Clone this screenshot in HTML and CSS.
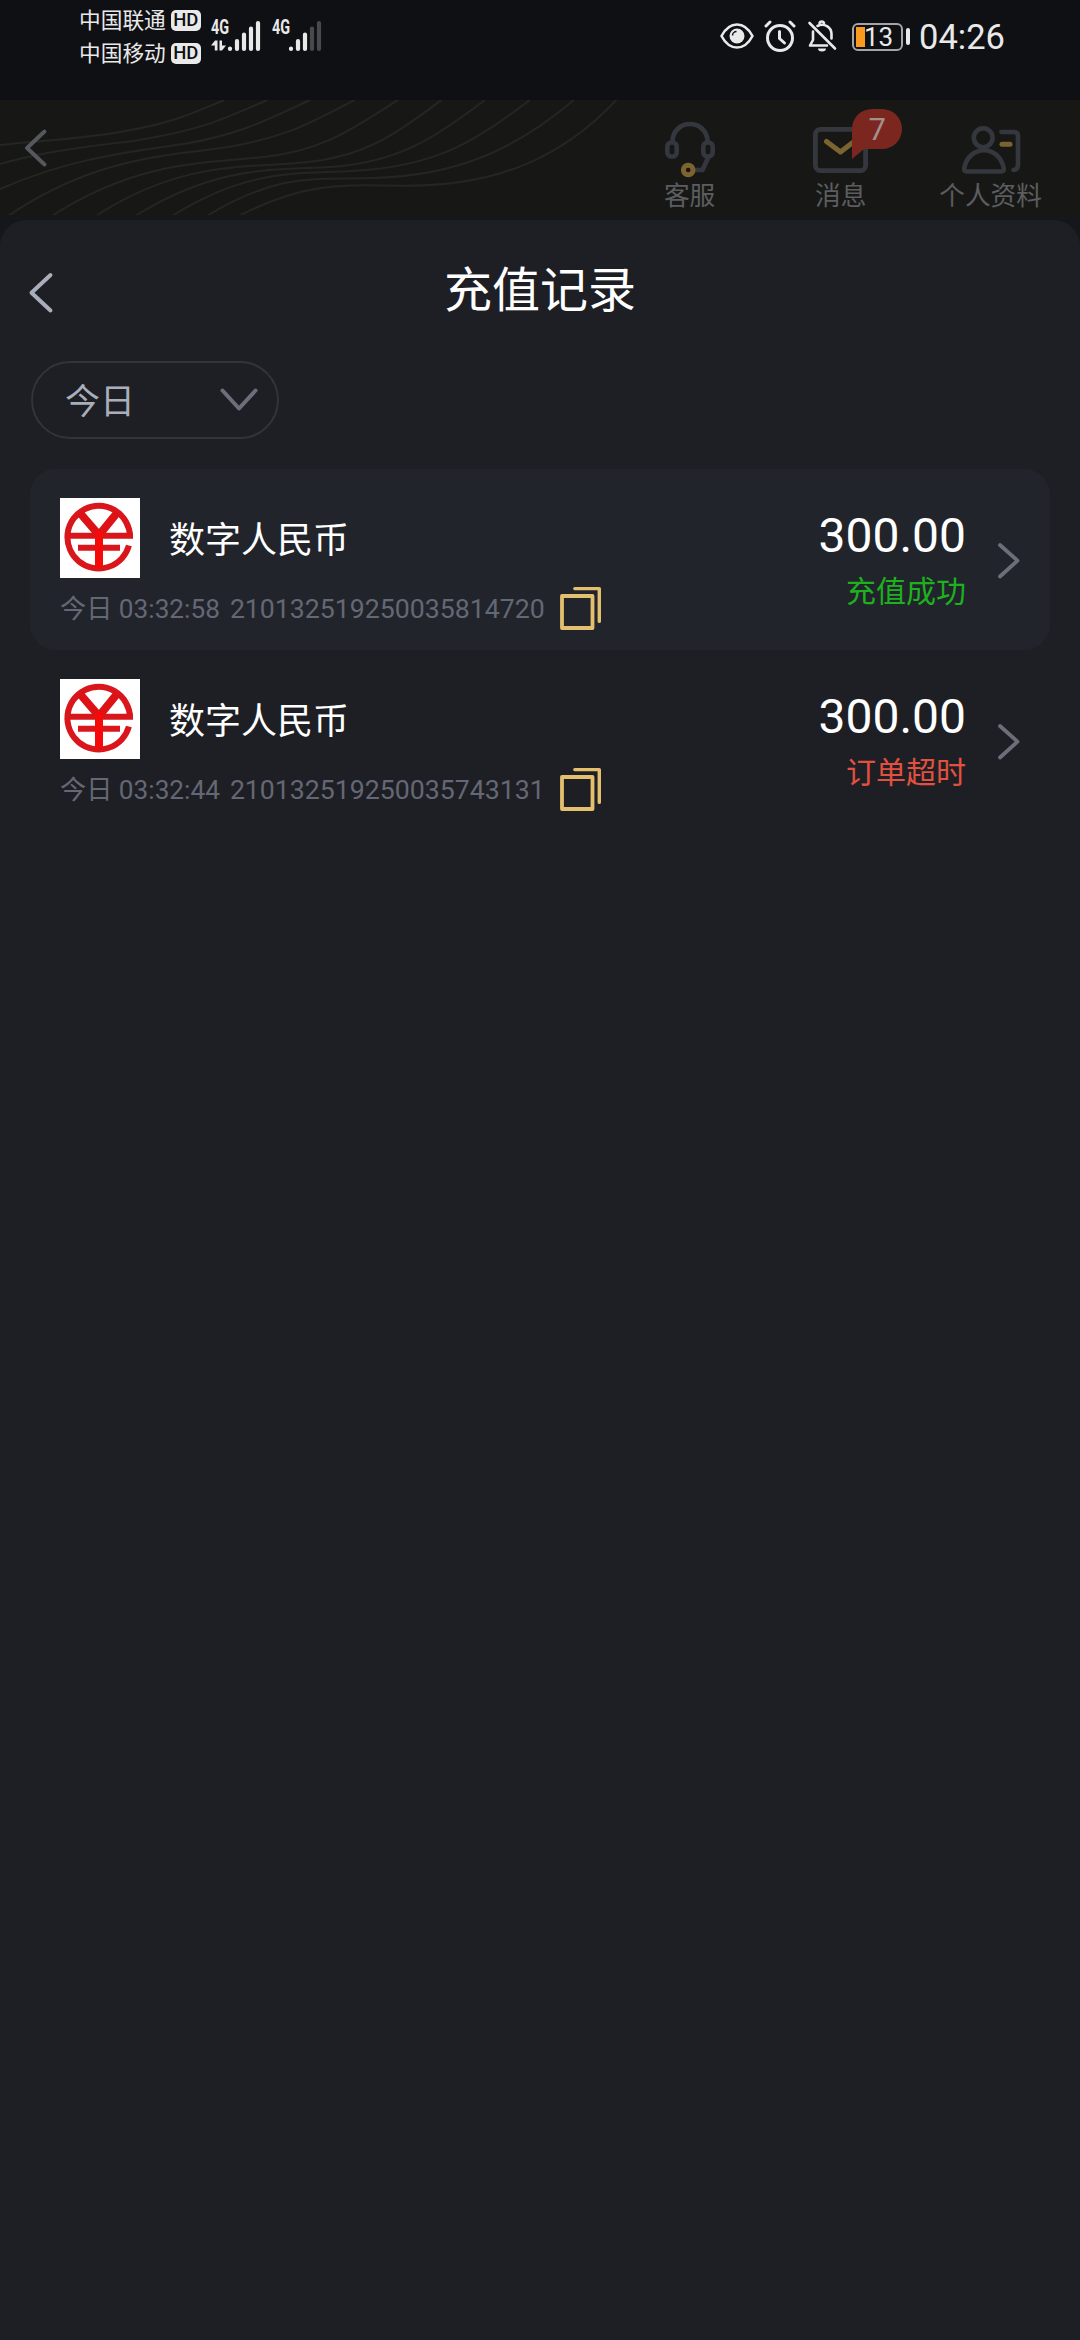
FILE: index.html
```html
<!DOCTYPE html>
<html lang="zh-CN">
<head>
<meta charset="utf-8">
<title>充值记录</title>
<link rel="stylesheet" href="styles.css">
</head>
<body>
<svg class="defs" width="0" height="0">
  <symbol id="ecny" viewBox="0 0 80 80">
    <rect width="80" height="80" fill="#fff"/>
    <g fill="none" stroke="#d8161b" stroke-width="6">
      <path d="M70 37.800A31.300 31.300 0 1 0 68.900 47.500"/>
      <path d="M8 37.800H73"/>
      <path d="M18 49.800H60"/>
      <path d="M20 15L39 37L57 15" stroke-width="8" stroke="#dd1216"/>
      <path d="M39 33V70" stroke-width="8" stroke="#f50a0a"/>
    </g>
  </symbol>
  <symbol id="copy" viewBox="0 0 42 44">
    <g fill="none" stroke="#e3bf6e" stroke-linejoin="round" stroke-linecap="round">
      <rect x="2" y="10" width="30.5" height="32" stroke-width="3.8"/>
      <path d="M14.8 2.6H39.3V35.4" stroke-width="3.4"/>
    </g>
  </symbol>
  <symbol id="next" viewBox="0 0 24 38">
    <path d="M3 3L20.500 18.700L3 34.500" fill="none" stroke="#6b6f7a" stroke-width="3.800" stroke-linecap="round" stroke-linejoin="round"/>
  </symbol>
</svg>

<div class="statusbar">
  <div class="carriers">
    <div class="carrier">中国联通<span class="hd">HD</span></div>
    <div class="carrier">中国移动<span class="hd">HD</span></div>
  </div>
  <div class="signal">
    <span class="net">4G</span>
    <svg width="52" height="34" viewBox="0 0 52 34">
      <g fill="none" stroke="#e9e9e9" stroke-width="4.200" stroke-linecap="round">
        <path d="M19 31V30.500M26 31V23M33 31V16.500M40 31V10.500M47 31V5"/>
      </g>
      <path d="M0 27.500L4 22.500H6.500V32.500H3.800V27.500ZM8.500 22.500H11V27.500H15L11 32.500H8.500Z" fill="#e9e9e9"/>
    </svg>
  </div>
  <div class="signal">
    <span class="net">4G</span>
    <svg width="52" height="34" viewBox="0 0 52 34">
      <g fill="none" stroke="#e9e9e9" stroke-width="4.200" stroke-linecap="round">
        <path d="M19 31V30.500M26 31V23M33 31V16.500"/>
        <path d="M40 31V10.500M47 31V5" stroke="#48494c"/>
      </g>
    </svg>
  </div>
  <div class="tray">
    <svg class="eye" width="34" height="28" viewBox="0 0 34 28">
      <path d="M1.500 14C6 5.500 11 2.500 17 2.500S28 5.500 32.500 14C28 22.500 23 25.500 17 25.500S6 22.500 1.500 14Z" fill="none" stroke="#e9e9e9" stroke-width="2.600" stroke-linejoin="round"/>
      <circle cx="17" cy="14" r="7.500" fill="#e9e9e9"/>
      <path d="M12.500 13.500A4 4 0 0 1 16.500 9.500" fill="none" stroke="#101115" stroke-width="1.500"/>
    </svg>
    <svg class="alarm" width="32" height="32" viewBox="0 0 32 32">
      <g fill="none" stroke="#e9e9e9" stroke-width="3" stroke-linecap="round" stroke-linejoin="round">
        <circle cx="16" cy="18" r="12.500"/>
        <path d="M15.500 11.500V18.500L20.500 23"/>
        <path d="M2 6L6 2M26 2L30 6"/>
      </g>
    </svg>
    <svg class="bell" width="30" height="32" viewBox="0 0 30 32">
      <g fill="none" stroke="#e9e9e9" stroke-width="2.600" stroke-linecap="round" stroke-linejoin="round">
        <path d="M2.500 3L28 28.500"/>
        <path d="M10.500 6C17 2.500 24.500 7 24.500 14V18.500"/>
        <path d="M6 11.500V20L3 25.500H20"/>
        <path d="M12.500 3A2.400 2.400 0 0 1 17 3"/>
      </g>
      <path d="M11 28.500H19A4 3 0 0 1 11 28.500Z" fill="#e9e9e9"/>
    </svg>
    <div class="battery"><span class="charge"></span><span class="percent">13</span></div>
    <span class="battery-tip"></span>
    <span class="clock">04:26</span>
  </div>
</div>

<header class="lobby">
  <svg class="waves" viewBox="0 60 2646 345" preserveAspectRatio="none">
    <path d="M0 195C120 180 220 175 320 150C420 130 480 95 550 60"/>
    <path d="M0 252C120 210 250 195 330 182C500 150 560 110 655 60"/>
    <path d="M0 327C170 235 320 215 450 192C600 160 660 115 760 60"/>
    <path d="M0 425C200 250 370 230 520 208C690 180 760 130 868 60"/>
    <path d="M130 405C330 250 480 250 640 232C790 212 860 150 975 60"/>
    <path d="M238 405C450 240 600 265 750 247C900 228 970 160 1082 60"/>
    <path d="M335 405C540 250 680 272 820 260C980 245 1070 170 1188 60"/>
    <path d="M425 405C620 260 730 284 870 272C1060 260 1160 190 1298 60"/>
    <path d="M510 405C690 275 770 300 910 294C1130 288 1270 200 1406 60"/>
    <path d="M590 405C760 300 850 317 1000 317C1220 317 1380 230 1510 60"/>
  </svg>
  <svg class="lobby-back" width="24" height="38" viewBox="0 0 24 38">
    <path d="M20.500 2.500L3 19L20.500 35.500" fill="none" stroke="#56585f" stroke-width="3.800" stroke-linecap="round" stroke-linejoin="round"/>
  </svg>
  <nav class="shortcuts">
    <div class="shortcut service">
      <svg width="50" height="56" viewBox="0 0 50 56">
        <g fill="none" stroke="#35373e" stroke-width="4.600" stroke-linejoin="round">
          <path d="M7.500 20V19A17.500 17.000 0 0 1 42.500 19V20"/>
          <rect x="2.300" y="20.500" width="9.400" height="14" rx="4.200"/>
          <rect x="38.300" y="20.500" width="9.400" height="14" rx="4.200"/>
          <path d="M43 36L37.500 48H29"/>
        </g>
        <circle cx="23.200" cy="48" r="4.800" fill="#17140c" stroke="#7c6430" stroke-width="5"/>
      </svg>
      <span>客服</span>
    </div>
    <div class="shortcut inbox">
      <svg width="55" height="56" viewBox="0 0 55 56">
        <rect x="2.400" y="7.400" width="50.200" height="41.200" rx="5" fill="none" stroke="#35373e" stroke-width="4.800"/>
        <path d="M13.500 19.500L27.500 30L41 19.500" fill="none" stroke="#7c6430" stroke-width="5" stroke-linecap="round" stroke-linejoin="round"/>
      </svg>
      <div class="badge">
        <svg width="50" height="50" viewBox="0 0 50 50"><path d="M20 0H30A20 20 0 0 1 30 40H12L0 50V20A20 20 0 0 1 20 0Z" fill="#7b2720"/></svg>
        <span>7</span>
      </div>
      <span>消息</span>
    </div>
    <div class="shortcut profile">
      <svg width="60" height="56" viewBox="0 0 60 56">
        <g fill="none" stroke="#35373e" stroke-width="4.600" stroke-linecap="round" stroke-linejoin="round">
          <circle cx="22.200" cy="15.800" r="9.400"/>
          <path d="M6 49.500H40Q43.500 49.500 42.700 46C40 34 31.500 28.200 23 28.200S5.500 34 3.300 46Q2.500 49.500 6 49.500Z"/>
          <path d="M40.500 10H53Q57 10 57 14V43Q57 47.500 52.500 48"/>
        </g>
        <path d="M41 22.300H49" stroke="#7c6430" stroke-width="5" stroke-linecap="round"/>
      </svg>
      <span>个人资料</span>
    </div>
  </nav>
</header>

<main class="sheet">
  <div class="titlebar">
    <svg class="back" width="26" height="42" viewBox="0 0 26 42">
      <path d="M22.500 3L3.500 20.700L22.500 38.500" fill="none" stroke="#a9aebb" stroke-width="4" stroke-linecap="round" stroke-linejoin="round"/>
    </svg>
    <h1>充值记录</h1>
  </div>

  <div class="filter">
    <span>今日</span>
    <svg width="38" height="24" viewBox="0 0 38 24">
      <path d="M2.500 2.500L19 20.500L35.500 2.500" fill="none" stroke="#6b6f7a" stroke-width="4" stroke-linecap="round" stroke-linejoin="round"/>
    </svg>
  </div>

  <ul class="records">
    <li class="record striped">
      <div class="info">
        <div class="method"><svg width="80" height="80"><use href="#ecny"/></svg><span>数字人民币</span></div>
        <div class="meta"><span>今日 03:32:58</span><span class="order">210132519250035814720</span><svg class="copy" width="42" height="44"><use href="#copy"/></svg></div>
      </div>
      <div class="result">
        <span class="amount">300.00</span>
        <span class="state success">充值成功</span>
      </div>
      <svg class="next" width="24" height="38"><use href="#next"/></svg>
    </li>
    <li class="record">
      <div class="info">
        <div class="method"><svg width="80" height="80"><use href="#ecny"/></svg><span>数字人民币</span></div>
        <div class="meta"><span>今日 03:32:44</span><span class="order">210132519250035743131</span><svg class="copy" width="42" height="44"><use href="#copy"/></svg></div>
      </div>
      <div class="result">
        <span class="amount">300.00</span>
        <span class="state timeout">订单超时</span>
      </div>
      <svg class="next" width="24" height="38"><use href="#next"/></svg>
    </li>
  </ul>
</main>
</body>
</html>
```

FILE: styles.css
```css
* { box-sizing: border-box; }

body {
  margin: 0;
  width: 1080px;
  height: 2340px;
  overflow: hidden;
  display: flex;
  flex-direction: column;
  background: #16171a;
  color: #fff;
  font-family: Roboto, "Noto Sans CJK SC", sans-serif;
}

svg { display: block; flex: none; }
.defs { position: absolute; }

/* system status bar */
.statusbar {
  flex: none;
  display: flex;
  align-items: flex-start;
  height: 100px;
  padding-left: 79px;
  background: #0f1014;
  color: #e9e9e9;
}
.carriers { width: 132px; padding-top: 4px; }
.carrier {
  display: flex;
  align-items: center;
  gap: 5px;
  height: 33px;
  font-size: 21.700px;
  line-height: 33px;
  white-space: nowrap;
}
.hd {
  width: 30px;
  height: 21px;
  border-radius: 5px;
  background: #e9e9e9;
  color: #0f1014;
  font: 500 18.500px/21px Roboto, sans-serif;
  text-align: center;
}
.signal { position: relative; width: 61px; padding-top: 18px; }
.net {
  position: absolute;
  left: 0;
  top: 18px;
  font: 700 20px/18px Roboto, sans-serif;
  transform: scaleX(0.72);
  transform-origin: left;
}
.tray { display: flex; margin-left: auto; padding-right: 75px; }
.eye { margin-top: 22px; }
.alarm { margin: 20px 0 0 10px; }
.bell { margin: 20px 0 0 11px; }
.battery {
  position: relative;
  width: 51px;
  height: 28px;
  margin: 23px 0 0 15px;
  border: 2px solid #a5a5a5;
  border-radius: 6px;
  padding: 2px;
}
.charge { display: block; width: 9px; height: 20px; background: #fb9a1c; }
.percent { position: absolute; left: 10px; top: -1px; font-size: 26px; line-height: 27px; }
.battery-tip { width: 4px; height: 17px; margin: 28px 0 0 3px; border-radius: 2px; background: #e9e9e9; }
.clock { width: 86px; margin: 17px 0 0 9px; font-size: 34.500px; line-height: 40px; }

/* dimmed page behind the sheet */
.lobby {
  position: relative;
  flex: none;
  display: flex;
  justify-content: space-between;
  height: 115px;
  margin-bottom: 5px;
  padding: 0 38px 0 24px;
  background: #171815;
}
.waves { position: absolute; left: 0; top: 0; width: 1080px; height: 115px; }
.waves path { fill: none; stroke: #252623; stroke-width: 2px; vector-effect: non-scaling-stroke; }
.lobby-back { position: relative; margin-top: 29px; }
.shortcuts { position: relative; display: flex; padding-top: 22px; }
.shortcut {
  position: relative;
  display: flex;
  flex-direction: column;
  align-items: center;
  color: #5c5d61;
  font-size: 25.700px;
  line-height: 32px;
  white-space: nowrap;
}
.shortcut > span { margin-top: 2px; }
.service { margin-right: 98px; }
.inbox { margin-right: 71px; }
.badge { position: absolute; left: 39px; top: -13px; }
.badge span { position: absolute; left: 0; top: 0; width: 50px; text-align: center; font-size: 31px; line-height: 41px; color: #a3908c; }

/* deposit history sheet */
.sheet {
  flex: 1;
  background: #1e1f24;
  border-radius: 26px 26px 0 0;
}
.titlebar {
  display: grid;
  grid-template-columns: 30px 1fr 30px;
  align-items: start;
  height: 141px;
}
.back { margin: 52px 0 0 28px; }
h1 { margin: 39px 0 0; text-align: center; font-size: 48px; font-weight: 400; line-height: 64px; }
.filter {
  display: flex;
  align-items: center;
  justify-content: space-between;
  width: 248px;
  height: 78px;
  margin-left: 31px;
  padding: 0 19px 0 32px;
  border: 2px solid #30343d;
  border-radius: 39px;
  color: #a9aebb;
  font-size: 35px;
}
.filter span { padding-bottom: 4px; }
.records { margin: 30px 30px 0; padding: 0; list-style: none; }
.record {
  display: flex;
  height: 181px;
  padding: 29px 29px 0 30px;
  border-radius: 26px;
}
.striped { background: #22242b; }
.info { flex: 1; }
.method { display: flex; align-items: center; gap: 29px; height: 80px; font-size: 36px; line-height: 74px; }
.method span { padding-top: 6px; }
.meta { display: flex; height: 62px; line-height: 62px; color: #646875; font-size: 26.200px; white-space: nowrap; }
.order { margin-left: 10px; font-size: 26.700px; }
.copy { margin: 8px 0 0 15px; }
.result { display: flex; flex-direction: column; align-items: flex-end; }
.amount { font-size: 48px; line-height: 75px; }
.state { font-size: 30px; line-height: 37px; }
.success { color: #1db01f; }
.timeout { color: #e2513f; }
.next { margin: 44px 0 0 31px; }
```
